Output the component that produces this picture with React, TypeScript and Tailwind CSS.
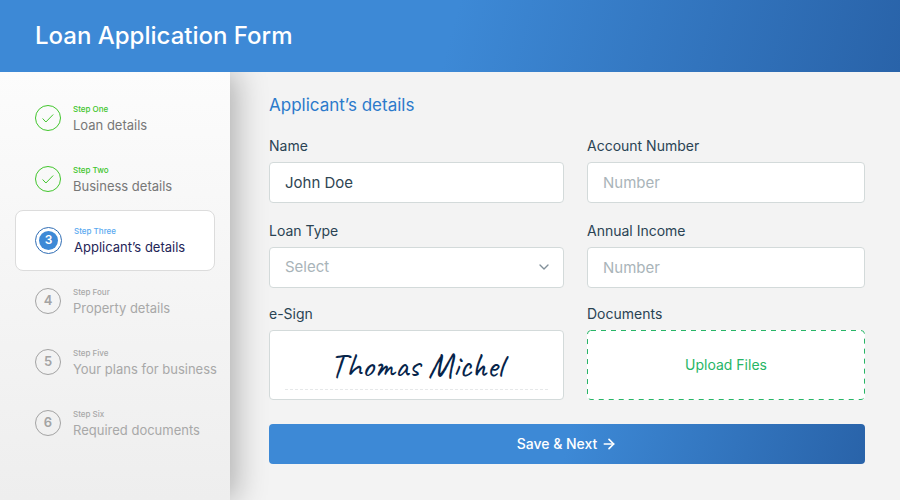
import { ArrowRight, ChevronDown } from "lucide-react";
import clsx from "clsx";

const steps = [
  { id: 1, label: "Step One", title: "Loan details", status: "done" },
  { id: 2, label: "Step Two", title: "Business details", status: "done" },
  { id: 3, label: "Step Three", title: "Applicant’s details", status: "active" },
  { id: 4, label: "Step Four", title: "Property details", status: "todo" },
  { id: 5, label: "Step Five", title: "Your plans for business", status: "todo" },
  { id: 6, label: "Step Six", title: "Required documents", status: "todo" },
];

const labelClass = "block text-sm leading-5 text-[#2a4353] mb-1.5";
const fieldClass =
  "block w-full h-[41px] rounded border border-[#d3dada] bg-white px-[15px] text-[15px] text-[#2f4553] placeholder:text-[#a9b4b9] placeholder:opacity-100 outline-none focus:border-[#3d89d6]";

function StepBadge({ id, status }: { id: number; status: string }) {
  if (status === "done") {
    return (
      <svg viewBox="0 0 26 26" className="size-[26px] shrink-0" fill="none" stroke="#41c52c">
        <circle cx="13" cy="13" r="12.5" />
        <path d="M7.6 13.5l3.3 3.5 7.3-7.5" />
      </svg>
    );
  }
  if (status === "active") {
    return (
      <span className="size-[27px] shrink-0 rounded-full border border-[#2f6db5] p-[3px]">
        <span className="flex size-full items-center justify-center rounded-full bg-[#3d89d6] text-xs font-semibold text-white">
          {id}
        </span>
      </span>
    );
  }
  return (
    <span className="flex size-[26px] shrink-0 items-center justify-center rounded-full border border-[#a3a3a3] text-[13px] font-semibold text-[#a3a3a3]">
      {id}
    </span>
  );
}

function Step({ id, label, title, status }: (typeof steps)[number]) {
  return (
    <li
      aria-current={status === "active" ? "step" : undefined}
      className={clsx(
        "flex h-[61px] items-center gap-3 rounded-lg border pb-px pl-[19px] whitespace-nowrap",
        status === "active" ? "border-[#dcdcdc] bg-white" : "border-transparent"
      )}
    >
      <StepBadge id={id} status={status} />
      <div className="flex flex-col gap-0.5">
        <span
          className={clsx(
            "text-[8px] leading-3 font-medium",
            status === "done" && "text-[#41c52c]",
            status === "active" && "text-[#5aa9f0]",
            status === "todo" && "text-[#a8a8a8]"
          )}
        >
          {label}
        </span>
        <span
          className={clsx(
            "text-[13px] leading-4",
            status === "done" && "text-[#777777]",
            status === "active" && "text-[#1f2557]",
            status === "todo" && "text-[#a8a8a8]"
          )}
        >
          {title}
        </span>
      </div>
    </li>
  );
}

export default function App() {
  return (
    <div className="flex min-h-screen flex-col bg-[#f3f3f3] font-['Inter',sans-serif]">
      <header className="z-10 flex h-[72px] items-center bg-[linear-gradient(105deg,#3d89d6_50%,#2963a9)] px-[35px]">
        <h1 className="text-2xl leading-8 font-medium text-white">Loan Application Form</h1>
      </header>

      <div className="flex flex-1">
        <nav
          aria-label="Steps"
          className="w-[230px] shrink-0 bg-linear-to-b from-[#fcfcfc] to-[#eeeeee] px-[15px] pt-4 shadow-[5px_0_30px_rgba(0,0,0,0.3)]"
        >
          <ol>
            {steps.map((step) => (
              <Step key={step.id} {...step} />
            ))}
          </ol>
        </nav>

        <main className="z-10 min-w-0 flex-1 pt-[21px] pr-[35px] pb-9 pl-[39px]">
          <h2 className="text-[17px] leading-6 text-[#2b7acb]">Applicant’s details</h2>

          <form className="mt-[19px]" onSubmit={(e) => e.preventDefault()}>
            <div className="grid grid-cols-[295fr_278fr] gap-x-[23px] gap-y-[18px]">
              <div>
                <label htmlFor="name" className={labelClass}>
                  Name
                </label>
                <input id="name" type="text" defaultValue="John Doe" className={fieldClass} />
              </div>
              <div>
                <label htmlFor="account" className={labelClass}>
                  Account Number
                </label>
                <input id="account" type="text" placeholder="Number" className={fieldClass} />
              </div>
              <div>
                <label htmlFor="loan-type" className={labelClass}>
                  Loan Type
                </label>
                <div className="relative">
                  <select id="loan-type" className={clsx(fieldClass, "appearance-none text-[#a9b4b9]!")}>
                    <option>Select</option>
                  </select>
                  <ChevronDown
                    size={16}
                    className="pointer-events-none absolute top-3 right-3 text-[#82909a]"
                  />
                </div>
              </div>
              <div>
                <label htmlFor="income" className={labelClass}>
                  Annual Income
                </label>
                <input id="income" type="text" placeholder="Number" className={fieldClass} />
              </div>
            </div>

            <div className="mt-4 grid grid-cols-[295fr_278fr] gap-x-[23px]">
              <div>
                <label htmlFor="sign" className={labelClass}>
                  e-Sign
                </label>
                <div className="h-[70px] rounded border border-[#d3dada] bg-white px-[15px] pt-[11px]">
                  <input
                    id="sign"
                    type="text"
                    defaultValue="Thomas Michel"
                    className="block h-12 w-full border-b border-dashed border-[#e6e8e9] text-center font-['Caveat',cursive] text-[34px] text-[#06244a] outline-none"
                  />
                </div>
              </div>
              <div>
                <label htmlFor="documents" className={labelClass}>
                  Documents
                </label>
                <label
                  htmlFor="documents"
                  className="relative flex h-[70px] cursor-pointer items-center justify-center rounded bg-white text-sm text-[#27b566]"
                >
                  <input id="documents" type="file" multiple className="sr-only" />
                  {/* border-dashed gives dashes that are too short */}
                  <svg className="pointer-events-none absolute inset-0 size-full" fill="none" stroke="#27b566">
                    <rect
                      x="0.5"
                      y="0.5"
                      rx="3.5"
                      strokeDasharray="5 5"
                      className="h-[calc(100%-1px)] w-[calc(100%-1px)]"
                    />
                  </svg>
                  Upload Files
                </label>
              </div>
            </div>

            <button
              type="submit"
              className="mt-6 flex h-10 w-full cursor-pointer items-center justify-center gap-1 rounded bg-[linear-gradient(105deg,#3d89d6_50%,#2963a9)] text-sm font-medium text-white"
            >
              Save &amp; Next
              <ArrowRight size={16} strokeWidth={2.5} />
            </button>
          </form>
        </main>
      </div>
    </div>
  );
}
